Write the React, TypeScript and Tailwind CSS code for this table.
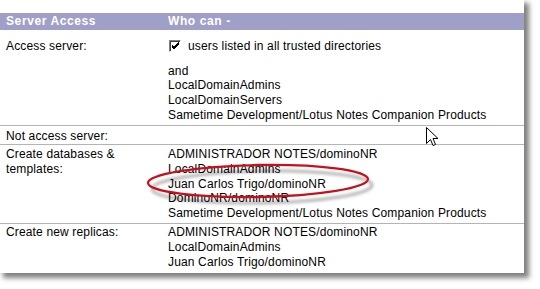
import React from "react";

const font = { fontFamily: '"Liberation Sans", Arial, sans-serif' };

function CheckBox() {
  return (
    <span className="inline-flex h-[12px] w-[12px] shrink-0 items-center justify-center border border-t-[#808080] border-l-[#808080] border-r-white border-b-white bg-white shadow-[inset_1px_1px_0_#404040]">
      <svg width="9" height="9" viewBox="0 0 9 9">
        <path d="M1 4 L3 6 L8 1 M1 5 L3 7 L8 2 M1 6 L3 8 L8 3" stroke="#000" strokeWidth="1" fill="none" />
      </svg>
    </span>
  );
}

function Row({
  label,
  lines,
  className = "",
}: {
  label: React.ReactNode;
  lines: React.ReactNode;
  className?: string;
}) {
  return (
    <div className={`grid grid-cols-[168px_1fr] ${className}`}>
      <div className="pl-[6px]">{label}</div>
      <div>{lines}</div>
    </div>
  );
}

function Cursor() {
  return (
    <svg width="13" height="21" viewBox="0 0 13 21" className="absolute left-[426px] top-[127px]">
      <path
        d="M0.5 0.5 L0.5 16.5 L4.5 12.5 L7 18.5 L9.5 17.5 L7 11.5 L12 11.5 Z"
        fill="#fff"
        stroke="#000"
        strokeWidth="1"
        strokeLinejoin="miter"
      />
    </svg>
  );
}

function Loop() {
  return (
    <svg width="250" height="60" viewBox="0 0 250 60" className="absolute left-[135px] top-[152px]">
      <defs>
        <filter id="loopShadow" x="-10%" y="-30%" width="120%" height="160%">
          <feGaussianBlur stdDeviation="1.5" />
        </filter>
      </defs>
      <ellipse cx="125" cy="32" rx="110" ry="16" fill="none" stroke="rgba(0,0,0,0.35)" strokeWidth="2.5" filter="url(#loopShadow)" transform="translate(2 3) rotate(-1 123 29)" />
      <ellipse cx="123" cy="29" rx="110" ry="16" fill="none" stroke="#c8101a" strokeWidth="2.3" transform="rotate(-1 123 29)" />
    </svg>
  );
}

export default function App() {
  return (
    <div className="h-[289px] w-[540px] bg-white" style={font}>
      <div className="relative h-[273px] w-[524px] bg-white pt-[13px] text-[12px] leading-[14.75px] tracking-[0.15px] text-black shadow-[4px_4px_5px_1px_rgba(0,0,0,0.5)]">
        <div className="grid h-[17px] grid-cols-[168px_1fr] items-center bg-[#9f9fc7] text-[12px] font-bold tracking-[0.6px] text-white">
          <div className="pl-[6px]">Server Access</div>
          <div>Who can -</div>
        </div>

        <Row
          className="pb-[2.4px] pt-[8.6px]"
          label={<div>Access server:</div>}
          lines={
            <>
              <div className="flex items-center gap-[7px] pl-[1px]">
                <CheckBox />
                <span>users listed in all trusted directories</span>
              </div>
              <div className="mt-[10.25px]">and</div>
              <div>LocalDomainAdmins</div>
              <div>LocalDomainServers</div>
              <div>Sametime Development/Lotus Notes Companion Products</div>
            </>
          }
        />
        <div className="h-px bg-[#b4b4b4]" />
        <Row className="pb-[0.6px] pt-[2.6px]" label={<div>Not access server:</div>} lines={<div>&nbsp;</div>} />
        <div className="h-px bg-[#b4b4b4]" />
        <Row
          className="pb-[2px] pt-[2.1px]"
          label={
            <>
              <div>Create databases &amp;</div>
              <div>templates:</div>
            </>
          }
          lines={
            <>
              <div>ADMINISTRADOR NOTES/dominoNR</div>
              <div>LocalDomainAdmins</div>
              <div>Juan Carlos Trigo/dominoNR</div>
              <div>DominoNR/dominoNR</div>
              <div>Sametime Development/Lotus Notes Companion Products</div>
            </>
          }
        />
        <div className="h-px bg-[#b4b4b4]" />
        <Row
          className="pt-[1.6px]"
          label={<div>Create new replicas:</div>}
          lines={
            <>
              <div>ADMINISTRADOR NOTES/dominoNR</div>
              <div>LocalDomainAdmins</div>
              <div>Juan Carlos Trigo/dominoNR</div>
            </>
          }
        />

        <Loop />
        <Cursor />
      </div>
    </div>
  );
}
